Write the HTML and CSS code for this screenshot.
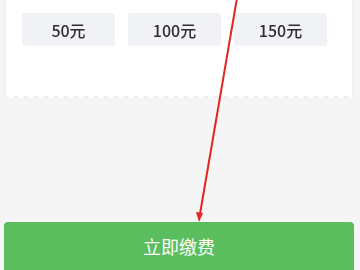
FILE: index.html
```html
<!DOCTYPE html>
<html lang="zh">
<head>
<meta charset="utf-8">
<link rel="stylesheet" href="styles.css">
</head>
<body>
<div class="page">
  <div class="card-wrap">
    <div class="card">
      <div class="amounts">
        <div class="amount">50元</div>
        <div class="amount">100元</div>
        <div class="amount">150元</div>
      </div>
    </div>
    <svg class="zig" width="346" height="6" viewBox="0 0 346 6">
      <defs>
        <pattern id="z" width="10" height="6" patternUnits="userSpaceOnUse">
          <path d="M0 0H10V1.5C7.5 1.5 7.5 5 5 5C2.5 5 2.5 1.5 0 1.5Z" fill="#fff"/>
        </pattern>
      </defs>
      <rect width="346" height="6" fill="url(#z)"/>
    </svg>
  </div>
  <button class="pay">立即缴费</button>
</div>
<svg class="annot" width="360" height="270" viewBox="0 0 360 270">
  <line x1="237" y1="-2" x2="200" y2="214" stroke="#e3261f" stroke-width="2"/>
  <path d="M196 212 L199 222 L203 213 Z" fill="#e3261f"/>
</svg>
</body>
</html>
```
FILE: styles.css
```css
html, body {
  margin: 0;
  padding: 0;
}
body {
  background: #f5f5f5;
  font-family: "Noto Sans CJK SC", "Noto Sans", sans-serif;
  width: 360px;
  height: 270px;
  overflow: hidden;
  position: relative;
}
.page {
  height: 270px;
  display: flex;
  flex-direction: column;
}
.card-wrap {
  margin: 0 8px 0 6px;
  filter: drop-shadow(0 0 1.5px rgba(0, 0, 0, 0.07));
}
.card {
  background: #fff;
  padding: 13px 0 0 16px;
  height: 81px;
}
.zig {
  display: block;
}
.amounts {
  display: grid;
  grid-template-columns: 93px 93px 93px;
  column-gap: 13px;
}
.amount {
  height: 33px;
  background: #f1f2f6;
  border-radius: 3px;
  display: flex;
  align-items: center;
  justify-content: center;
  font-size: 16px;
  font-weight: 500;
  color: #2e2e2e;
}
.pay {
  margin: auto 6px 0 4px;
  height: 48px;
  border: none;
  border-radius: 4px 4px 0 0;
  background: #5abe5f;
  color: #fff;
  font-family: "Noto Sans CJK SC", "Noto Sans", sans-serif;
  font-size: 18px;
  padding: 0;
}
.annot {
  position: absolute;
  left: 0;
  top: 0;
  pointer-events: none;
}
```
